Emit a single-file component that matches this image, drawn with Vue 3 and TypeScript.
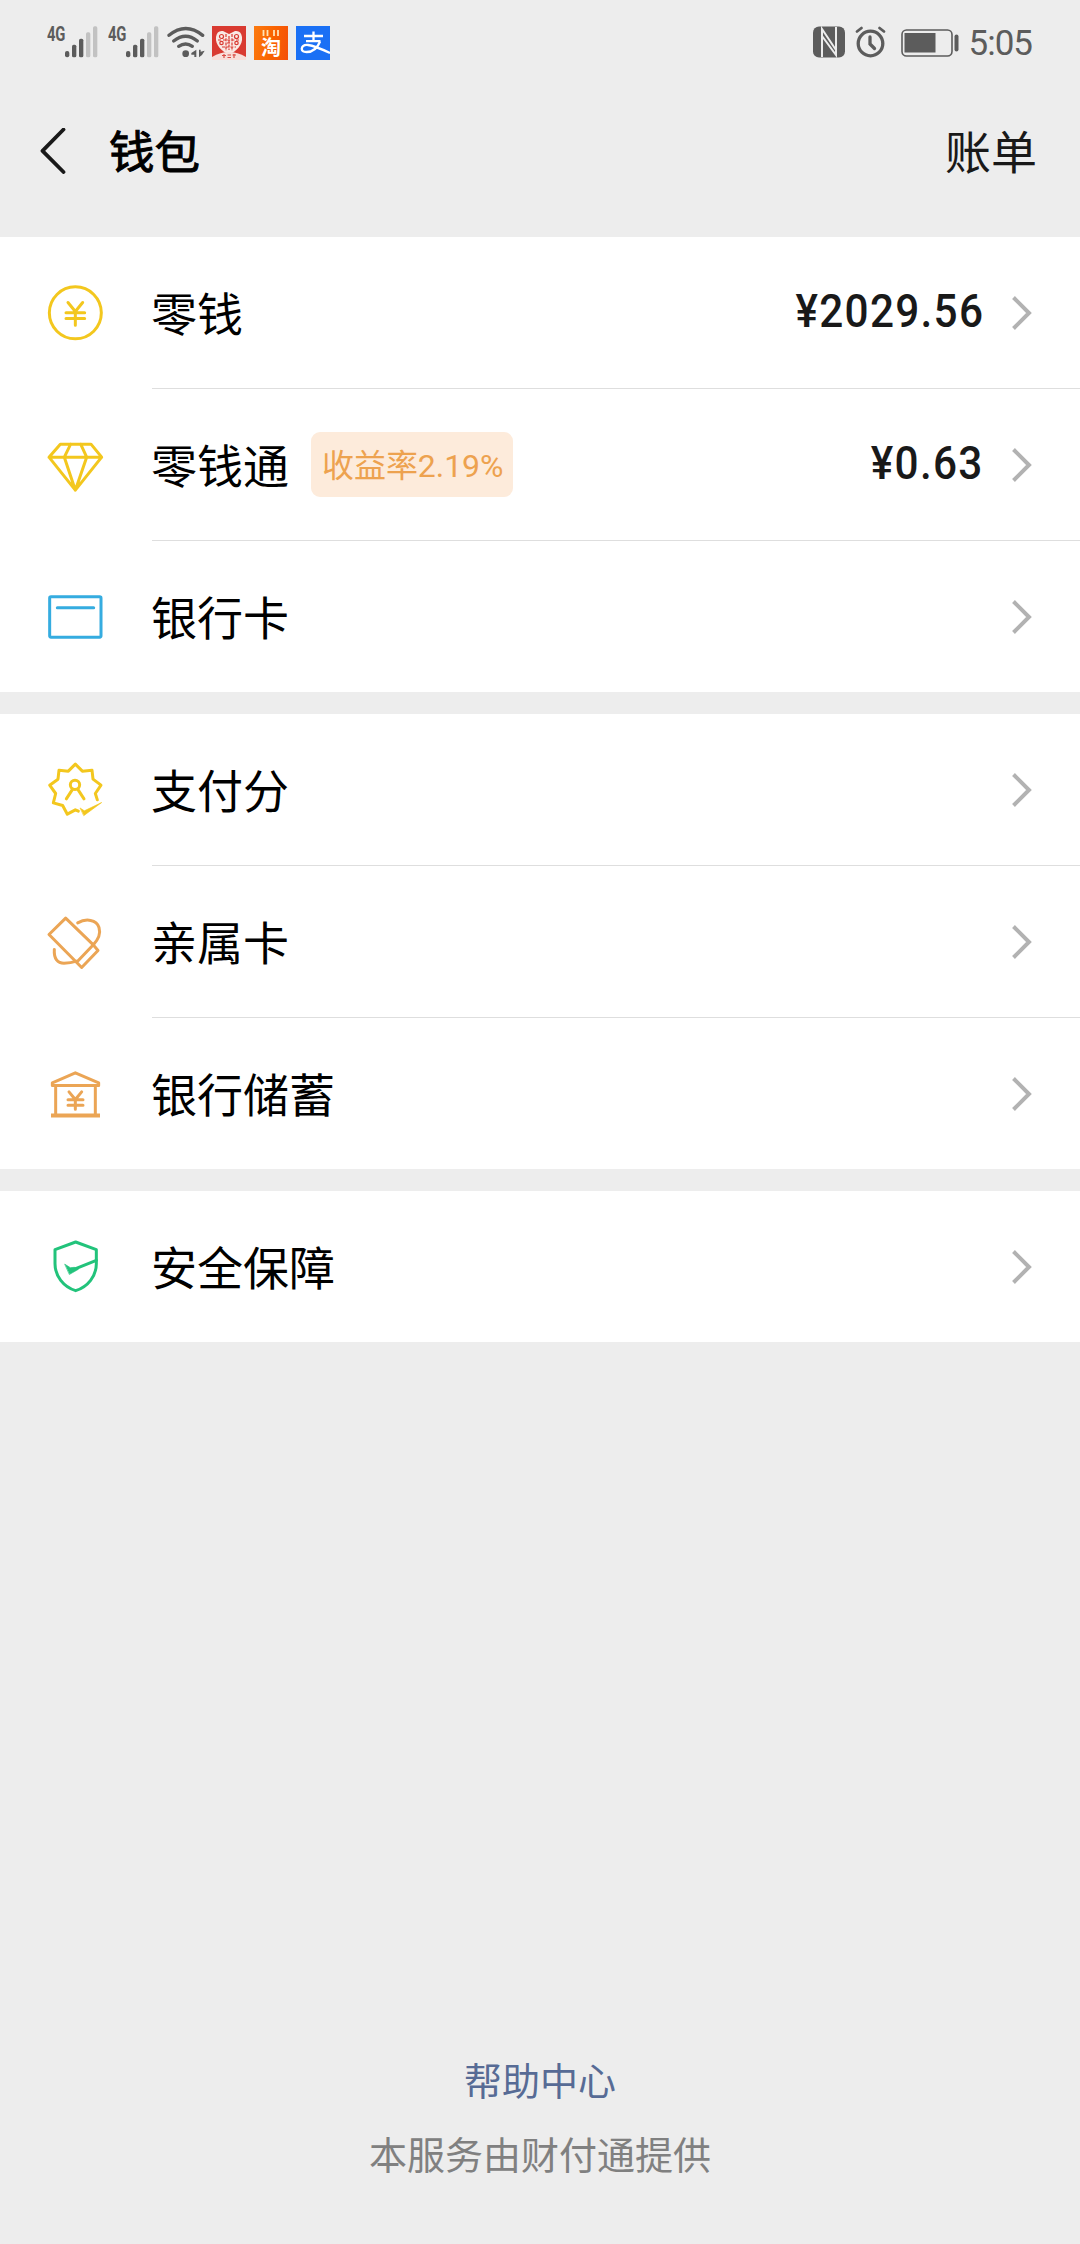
<script setup lang="ts">
interface Row {
  icon: string
  label: string
  badge?: string
  amount?: string
}

const groups: Row[][] = [
  [
    { icon: 'coin', label: '零钱', amount: '¥2029.56' },
    { icon: 'diamond', label: '零钱通', badge: '收益率2.19%', amount: '¥0.63' },
    { icon: 'card', label: '银行卡' },
  ],
  [
    { icon: 'score', label: '支付分' },
    { icon: 'family', label: '亲属卡' },
    { icon: 'bank', label: '银行储蓄' },
  ],
  [{ icon: 'shield', label: '安全保障' }],
]
</script>

<template>
  <div class="screen">
    <header class="status">
      <div class="status-left">
        <div v-for="n in 2" :key="n" class="cell">
          <span class="net">4G</span>
          <svg class="signal" viewBox="51 0 102 102">
            <g fill="#5c5c5c">
              <rect x="54" y="75" width="13" height="19" rx="6" />
              <rect x="75" y="56" width="13" height="38" rx="5" />
              <rect x="96" y="38" width="13" height="56" rx="5" />
            </g>
            <g fill="#c2c2c2">
              <rect x="117" y="19" width="13" height="75" rx="5" />
              <rect x="138" y="1" width="13" height="93" rx="5" />
            </g>
          </svg>
        </div>
        <svg class="wifi" viewBox="408 47 126 102">
          <g fill="none" stroke="#5c5c5c" stroke-width="10" stroke-linecap="round">
            <path d="M417 75Q467 34 518 75" />
            <path d="M431 92Q467 63 502 92" />
            <path d="M446 108Q467 94 487 108" />
          </g>
          <circle cx="467" cy="130" r="10" fill="#5c5c5c" />
          <path d="M499 118V140H493V133H484V128ZM507 118H512V124L524 121 516 134 507 141Z" fill="#5c5c5c" />
        </svg>
        <svg class="app" viewBox="0 0 34 34">
          <rect width="34" height="34" fill="#d93a31" />
          <path d="M17 28C10 26 3 19 4 11Q5 4 11 5L17 8L23 5Q29 4 30 11C31 19 24 26 17 28Z" fill="#f9e9e4" />
          <g fill="none" stroke="#d93a31" stroke-width="1.2">
            <circle cx="9.5" cy="10.5" r="2" /><circle cx="24.5" cy="10.5" r="2" />
            <circle cx="9.5" cy="17" r="1.7" /><circle cx="24.5" cy="17" r="1.7" />
            <path d="M14 8V25M20 8V25M11 14H23M15 17H19M6 14H10M24 14H28M10 21H24M17 10V24" stroke-dasharray="3 1.2" />
          </g>
          <path d="M0 34V31Q17 21 34 31V34Z" fill="#f8ded9" />
          <path d="M10 29.500H14M12 28V32M15.500 29H19M15.500 31.500H19M20.500 29H24M22 28V32" stroke="#d94b43" stroke-width="1.200" />
        </svg>
        <div class="app taobao">
          <svg class="promo" viewBox="0 0 34 11">
            <path d="M9.500 4V10M13.500 4V10M20 4V10M24 4V10" stroke="#ffe3b4" stroke-width="1.800" />
          </svg>
          <span class="tao">淘</span>
        </div>
        <svg class="app" viewBox="0 0 34 34">
          <rect width="34" height="34" fill="#1a70f5" />
          <g fill="none" stroke="#fff" stroke-width="2.300">
            <path d="M8 10H27M17.500 5.500V15M10 15.200H24.500" />
            <path d="M24 15.500Q20 26 10.500 26Q5.500 26 5.800 22.500Q6.500 18.500 12 19Q19 20 34 27" />
          </g>
        </svg>
      </div>
      <div class="status-right">
        <svg class="nfc" viewBox="0 0 32 32">
          <rect y="0.500" width="32" height="31" rx="6" fill="#5c5c5c" />
          <path d="M9 31V3L23 24M23 1V29L9 10" fill="none" stroke="#ececec" stroke-width="2" />
        </svg>
        <svg class="clock" viewBox="0 0 31 32">
          <g fill="none" stroke="#5c5c5c" stroke-width="3.300" stroke-linecap="round">
            <circle cx="15.500" cy="17.500" r="12.300" />
            <path d="M2 5.500L6.500 2M29 5.500L24.500 2" stroke-width="2.800" />
            <path d="M15 11V18L19.500 22.500" />
          </g>
        </svg>
        <svg class="battery" viewBox="0 0 58 28">
          <rect x="1" y="1" width="50" height="26" rx="4.500" fill="none" stroke="#5c5c5c" stroke-width="1.600" />
          <rect x="3.500" y="4" width="31" height="19.500" fill="#5c5c5c" />
          <rect x="53.500" y="5.500" width="4" height="17" rx="2" fill="#5c5c5c" />
        </svg>
        <span class="time">5:05</span>
      </div>
    </header>

    <nav class="navbar">
      <svg class="back" viewBox="0 0 26 46">
        <path d="M23.500 1.500L2.500 22.800L23.500 44" fill="none" stroke="#191919" stroke-width="3.800" stroke-linecap="round" stroke-linejoin="round" />
      </svg>
      <h1 class="title">钱包</h1>
      <span class="bill">账单</span>
    </nav>

    <main>
      <section v-for="(group, g) in groups" :key="g" class="group">
        <div v-for="row in group" :key="row.label" class="row">
          <svg v-if="row.icon === 'coin'" class="icon yellow" viewBox="45 67.5 180 180">
            <circle cx="136" cy="157" r="78" />
            <path d="M114 126L136 153L158 126M136 153V194M108 157H164M108 174H164" />
          </svg>
          <svg v-else-if="row.icon === 'diamond'" class="icon yellow" viewBox="45 523.5 180 180">
            <path d="M91 551H183L215 590L136 689L57 590ZM57 590H215M122 551L103 590L136 689L170 590L152 551" />
          </svg>
          <svg v-else-if="row.icon === 'card'" class="icon blue" viewBox="45 49.5 180 180">
            <rect x="59" y="79" width="154" height="121" rx="4" />
            <path d="M82 112H191" />
          </svg>
          <svg v-else-if="row.icon === 'score'" class="icon yellow" viewBox="45 58.500 180 180">
            <path d="M145 212L136 208L112 221L98 195L70 187L77 159L59 134L84 116L87 89L115 92L136 71L157 92L186 89L189 116L213 134L196 159L202 178" />
            <circle cx="135" cy="133" r="14" />
            <path d="M128 146L109 175M143 146L162 175" />
            <path class="solid" d="M151 203L163 211L215 186L162 225Z" />
          </svg>
          <svg v-else-if="row.icon === 'family'" class="icon amber" viewBox="45 514.5 180 180">
            <path d="M107 533L57 582L155 681L204 630L190 613ZM190 613L140 665" />
            <path d="M143 547C168 533 200 537 207 561C213 581 205 595 190 613M73 627C71 655 83 668 102 668C116 668 128 666 140 662" />
          </svg>
          <svg v-else-if="row.icon === 'bank'" class="icon amber" viewBox="45 70.5 180 180">
            <path d="M67 135V127L136 97L206 127V135ZM77 141V221M196 141V221" />
            <path d="M63 225H210" class="base" />
            <path d="M117 154L136 177L155 154M136 177V206M114 178H159M114 194H159" />
          </svg>
          <svg v-else class="icon green" viewBox="45 591 180 180">
            <path d="M137 606L199 629V671C199 708 174 740 137 752C100 740 75 708 75 671V629Z" />
            <path d="M122 692L199 661" />
            <path class="solid" d="M105 673L121 683L133 682L145 688L119 703Z" />
          </svg>
          <div class="body">
            <span class="label">{{ row.label }}</span>
            <span v-if="row.badge" class="badge">{{ row.badge }}</span>
            <span v-if="row.amount" class="amount">{{ row.amount }}</span>
            <svg class="chevron" viewBox="0 0 22 36">
              <path d="M2.500 2.500L18 18L2.500 33.500" fill="none" stroke="#b2b2b2" stroke-width="4" />
            </svg>
          </div>
        </div>
      </section>
    </main>

    <footer class="footer">
      <a class="help">帮助中心</a>
      <span class="provider">本服务由财付通提供</span>
    </footer>
  </div>
</template>

<style>
body {
  margin: 0;
  background: #ededed;
}
</style>

<style scoped>
.screen {
  display: flex;
  flex-direction: column;
  width: 1080px;
  height: 2244px;
  background: #ededed;
  color: #000;
  font-family: Roboto, "Noto Sans CJK SC", sans-serif;
}
.status {
  display: flex;
  justify-content: space-between;
  box-sizing: border-box;
  height: 86px;
  padding: 26px 48px 0 47px;
}
.status-left,
.status-right {
  display: flex;
  align-items: flex-start;
}
.cell {
  display: flex;
  width: 61px;
}
.net {
  width: 17px;
  margin-top: -3px;
  color: #5c5c5c;
  font-size: 20px;
  font-weight: 700;
  line-height: 22px;
  letter-spacing: -0.3px;
  transform: scaleX(0.74);
  transform-origin: 0 50%;
}
.signal {
  width: 34px;
  height: 34px;
}
.wifi {
  width: 42px;
  height: 34px;
  margin-left: -3px;
  margin-right: 4px;
}
.app {
  width: 34px;
  height: 34px;
  margin-right: 8px;
}
.taobao {
  display: flex;
  flex-direction: column;
  align-items: center;
  background: linear-gradient(100deg, #fb7a10, #fa6400 50%, #f4500a);
}
.promo {
  width: 34px;
  height: 11px;
}
.tao {
  color: #fff;
  font-size: 20px;
  font-weight: 700;
  line-height: 22px;
}
.nfc {
  width: 32px;
  height: 32px;
}
.clock {
  width: 31px;
  height: 32px;
  margin-left: 10px;
}
.battery {
  width: 58px;
  height: 28px;
  margin: 3px 0 0 15px;
}
.time {
  margin-left: 10px;
  font-size: 35px;
  line-height: 35px;
  letter-spacing: -1px;
  color: #5c5c5c;
}
.navbar {
  display: flex;
  align-items: center;
  box-sizing: border-box;
  height: 151px;
  padding: 0 43px 19px 40px;
}
.back {
  width: 26px;
  height: 46px;
  margin-bottom: 2px;
}
.title {
  flex: 1;
  margin: 4px 0 0 43px;
  font-size: 45.5px;
  font-weight: 400;
  line-height: 60px;
  -webkit-text-stroke: 1px #000;
}
.bill {
  margin-top: 2px;
  font-size: 46px;
  line-height: 60px;
  color: #191919;
}
.group {
  margin-bottom: 22px;
  background: #fff;
}
.row {
  display: flex;
  align-items: center;
  height: 152px;
  padding-left: 45px;
}
.row:last-child {
  box-sizing: border-box;
  height: 151px;
  padding-top: 1px;
}
.icon {
  width: 60px;
  height: 60px;
  fill: none;
  stroke: currentColor;
  stroke-width: 9;
  stroke-linecap: round;
  stroke-linejoin: round;
}
.icon .solid {
  fill: currentColor;
  stroke-width: 2;
}
.icon .base {
  stroke-width: 12;
  stroke-linecap: butt;
}
.yellow {
  color: #f3c71e;
}
.blue {
  color: #35ace0;
}
.amber {
  color: #eba555;
}
.green {
  color: #22c37b;
}
.body {
  display: flex;
  flex: 1;
  align-items: center;
  box-sizing: border-box;
  height: 100%;
  margin-left: 47px;
  padding-right: 47px;
  border-bottom: 1px solid #dedede;
}
.row:last-child .body {
  border-bottom: 0;
}
.label {
  margin-left: -1px;
  padding-top: 4px;
  font-size: 46px;
  line-height: 60px;
}
.badge {
  margin-left: 22px;
  padding: 3px 10px 0 11px;
  border-radius: 9px;
  background: #fdebdb;
  color: #eda24f;
  font-size: 32px;
  line-height: 62px;
  letter-spacing: -0.05px;
}
.amount {
  margin: 0 0 3px auto;
  color: #191919;
  font-size: 46px;
  font-weight: 500;
  line-height: 60px;
  letter-spacing: 1.4px;
  transform: scaleX(0.92);
  transform-origin: 100% 50%;
}
.chevron {
  width: 22px;
  height: 36px;
  margin-left: auto;
}
.amount + .chevron {
  margin-left: 27px;
}
.footer {
  display: flex;
  flex-direction: column;
  align-items: center;
  margin-top: auto;
  padding-bottom: 60px;
  font-size: 38px;
  line-height: 56px;
}
.help {
  margin-bottom: 18px;
  color: #576b95;
}
.provider {
  color: #808080;
}
</style>
